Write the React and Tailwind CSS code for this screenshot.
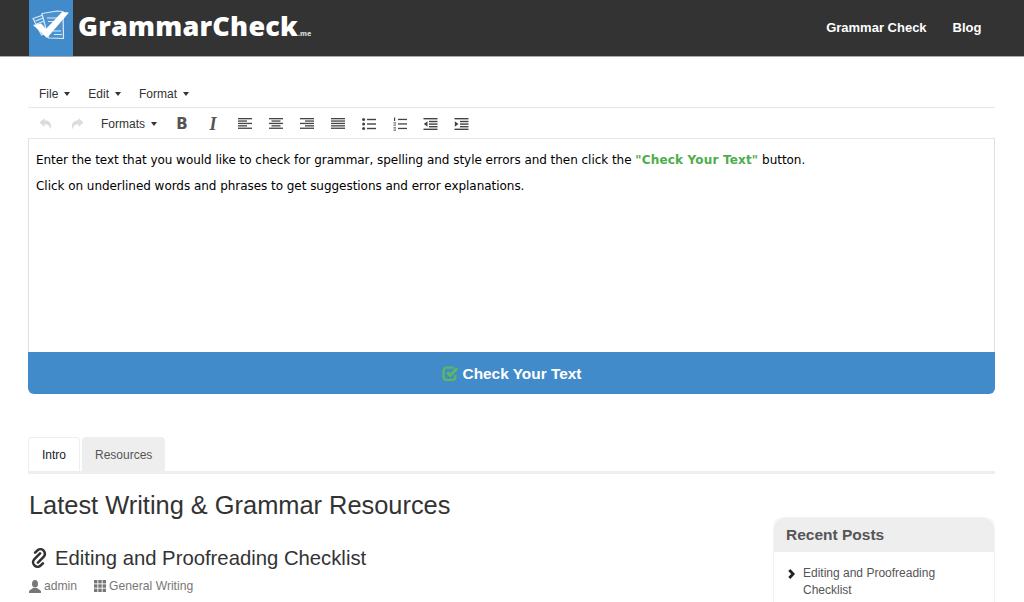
function Caret({ className = "ml-[6px]" }) {
  return <span className={`${className} inline-block w-0 h-0 border-x-[3px] border-x-transparent border-t-[4px] border-t-[#333]`}></span>
}

function Lines({ rows }) {
  // rows: [x, width] pairs drawn from the top of a 14px box
  return (
    <svg width="14" height="14" viewBox="0 0 14 14" fill="#444">
      {rows.map((r, i) => (
        <rect key={i} x={r[0]} y={1 + i * 2.4} width={r[1]} height="1.3" />
      ))}
    </svg>
  )
}

function ToolIcon({ children, className = "w-[31px]" }) {
  return <div className={`${className} h-[30px] flex items-center justify-center`}>{children}</div>
}

function Arrow({ flip }) {
  return (
    <svg width="14" height="14" viewBox="0 0 14 14" fill="#dcdcdc" className={flip ? "-scale-x-100" : ""}>
      <path d="M5.500 1L0.500 5.500l5 4.500V7.200c3 0 5 1 6 5.300 2-5.500-.5-9-6-9.300z" />
    </svg>
  )
}

function Bullets() {
  return (
    <svg width="14" height="14" viewBox="0 0 14 14" fill="#444">
      <circle cx="1.600" cy="2.500" r="1.500" />
      <circle cx="1.600" cy="7" r="1.500" />
      <circle cx="1.600" cy="11.500" r="1.500" />
      <rect x="5" y="1.800" width="9" height="1.400" />
      <rect x="5" y="6.300" width="9" height="1.400" />
      <rect x="5" y="10.800" width="9" height="1.400" />
    </svg>
  )
}

function Numbers() {
  return (
    <svg width="14" height="14" viewBox="0 0 14 14" fill="#444">
      <rect x="1" y="0.500" width="1.200" height="3.500" />
      <rect x="0.500" y="5.400" width="2.500" height="1" />
      <rect x="0.500" y="7.600" width="2.500" height="1" />
      <rect x="0.500" y="10.400" width="2.500" height="1" />
      <rect x="0.500" y="12.600" width="2.500" height="1" />
      <rect x="5" y="1.800" width="9" height="1.300" />
      <rect x="5" y="6.300" width="9" height="1.300" />
      <rect x="5" y="10.800" width="9" height="1.300" />
    </svg>
  )
}

function Indent({ out }) {
  return (
    <svg width="15" height="14" viewBox="0 0 15 14" fill="#444">
      <rect x="0.500" y="1" width="14" height="1.400" />
      <rect x="6" y="3.800" width="8.500" height="1.400" />
      <rect x="6" y="6.400" width="8.500" height="1.400" />
      <rect x="6" y="9" width="8.500" height="1.400" />
      <rect x="0.500" y="11.600" width="14" height="1.400" />
      {out ? <path d="M4.500 4.200v5.600L0.800 7z" /> : <path d="M0.800 4.200v5.600L4.500 7z" />}
    </svg>
  )
}

function LogoMark() {
  return (
    <svg width="44" height="56" viewBox="0 0 44 56" fill="none">
      <g stroke="#dbe9f6" strokeWidth="1.200" strokeLinejoin="round">
        <path d="M4 18.500l13-4.500 5 18-9.500 3z" fill="#4c92ce" />
        <path d="M6.500 21l8-3M7.500 24l8-3M8.500 27l5-2" />
        <path d="M13 13.500l15-2.500 6 .5 .5 27-15-.5-6.500-24z" fill="#4c92ce" />
        <path d="M18 18h10M19 21.500h8M24 31h8M25 34.500h8" />
      </g>
      <path d="M4 25l8-1.500 5 5.500L33 12l7 .5L18 38z" fill="#fff" />
    </svg>
  )
}

function LinkGlyph() {
  return (
    <svg width="20" height="20" viewBox="1 0 20 20" fill="none" stroke="#333" strokeWidth="2.600" strokeLinecap="round" strokeLinejoin="round">
      <g transform="rotate(-45 11 10)">
        <path d="M15 7.500H7a4.500 4.500 0 0 0 0 9H10" />
        <path d="M7 12.500h8a4.500 4.500 0 0 0 0-9H12" />
      </g>
    </svg>
  )
}

function UserGlyph() {
  return (
    <svg width="12" height="13" viewBox="0 0 12 13" fill="#777">
      <ellipse cx="6" cy="3.800" rx="3" ry="3.800" />
      <path d="M0 13v-1.500c0-1.600 2.500-2 4-3.500h4c1.500 1.500 4 1.900 4 3.500V13z" />
    </svg>
  )
}

function GridGlyph() {
  return (
    <svg width="12" height="12" viewBox="0 0 12 12" fill="#777">
      {[0, 4.300, 8.600].map((x) =>
        [0, 4.300, 8.600].map((y) => <rect key={`${x}-${y}`} x={x} y={y} width="3.400" height="3.400" />)
      )}
    </svg>
  )
}

function Chevron() {
  return (
    <svg width="8" height="10" viewBox="0 0 8 10" fill="none" stroke="#222" strokeWidth="2.800">
      <path d="M1.300 1l3.800 4-3.800 4" />
    </svg>
  )
}

function CheckBox() {
  return (
    <svg width="18" height="17" viewBox="0 0 17 16" fill="none" stroke="#5cb85c" className="mr-[3px]">
      <path d="M12.500 9.500v2a2.500 2.500 0 0 1-2.500 2.500H4a2.500 2.500 0 0 1-2.500-2.500V5A2.500 2.500 0 0 1 4 2.500h7" strokeWidth="2.200" />
      <path d="M4.800 6.800l3 3 6.500-6.800" strokeWidth="2.800" />
    </svg>
  )
}

export default function App() {
  return (
    <div className="h-[602px] overflow-hidden bg-white font-['Liberation_Sans',Arial,sans-serif] text-[#333]">
      {/* Header */}
      <header className="h-[57px] bg-[#333] border-b border-[#aaa] px-[28.5px] flex items-start justify-between">
        <div className="flex items-start">
          <div className="w-[44.500px] h-[56px] bg-[#428bca]">
            <LogoMark />
          </div>
          <div className="flex items-baseline ml-[5px] mt-[6px] text-white font-['Open_Sans',sans-serif] font-extrabold">
            <span className="text-[27px] leading-[40px] tracking-[0.2px]">GrammarCheck</span>
            <span className="text-[7px] text-[#ccc]">.me</span>
          </div>
        </div>
        <nav className="flex items-center h-[56px] gap-[26px] pr-[14px] text-white text-[13px] font-bold">
          <span>Grammar Check</span>
          <span>Blog</span>
        </nav>
      </header>

      <main className="pl-[28px] pr-[29px]">
        {/* Editor */}
        <div className="mt-[23px]">
          <div className="h-[28px] flex items-center gap-[18px] pl-[11px] border-b border-[#e6e6e6] text-[12px] text-[#333]">
            <span className="flex items-center">File<Caret /></span>
            <span className="flex items-center">Edit<Caret /></span>
            <span className="flex items-center">Format<Caret /></span>
          </div>
          <div className="h-[31px] pt-[1px] flex items-center pl-[3px] border-b border-[#e6e6e6]">
            <ToolIcon className="w-[30px]"><Arrow /></ToolIcon>
            <ToolIcon className="w-[32px]"><Arrow flip /></ToolIcon>
            <div className="ml-[8px] w-[66px] flex items-center text-[12px]">Formats<Caret /></div>
            <ToolIcon className="w-[30px]"><span className="mt-[2px] font-bold text-[15px] text-[#555] font-['DejaVu_Sans',sans-serif]">B</span></ToolIcon>
            <ToolIcon className="w-[32px]"><span className="mt-[1px] italic font-bold text-[18px] text-[#555] font-['Liberation_Serif',serif]">I</span></ToolIcon>
            <ToolIcon><Lines rows={[[0, 14], [0, 9], [0, 14], [0, 9], [0, 14]]} /></ToolIcon>
            <ToolIcon><Lines rows={[[0, 14], [2.500, 9], [0, 14], [2.500, 9], [0, 14]]} /></ToolIcon>
            <ToolIcon><Lines rows={[[0, 14], [5, 9], [0, 14], [5, 9], [0, 14]]} /></ToolIcon>
            <ToolIcon><Lines rows={[[0, 14], [0, 14], [0, 14], [0, 14], [0, 14]]} /></ToolIcon>
            <ToolIcon><Bullets /></ToolIcon>
            <ToolIcon><Numbers /></ToolIcon>
            <ToolIcon><Indent out /></ToolIcon>
            <ToolIcon><Indent /></ToolIcon>
          </div>
          <div className="h-[213px] border-x border-[#e0e0e0] px-[7px] pt-[13px] text-[12px] leading-[16px] text-black font-['DejaVu_Sans',Verdana,sans-serif]">
            <p className="tracking-[-0.04px]">
              Enter the text that you would like to check for grammar, spelling and style errors and then click the{" "}
              <strong className="text-[#4cae4c] tracking-[0.18px]">"Check Your Text"</strong> button.
            </p>
            <p className="mt-[10px] tracking-[-0.04px]">Click on underlined words and phrases to get suggestions and error explanations.</p>
          </div>
          <button className="w-full h-[42px] pt-[1px] bg-[#428bca] rounded-b-[6px] flex items-center justify-center text-white text-[15.4px] font-bold">
            <CheckBox />
            Check Your Text
          </button>
        </div>

        {/* Tabs */}
        <div className="mt-[43px] flex gap-[2px] border-b-[3px] border-[#eee] text-[12px]">
          <div className="h-[34px] px-[13px] flex items-center bg-white border border-b-0 border-[#eee] rounded-t-[4px] text-[#222]">Intro</div>
          <div className="h-[34px] pt-[1px] px-[13px] flex items-center bg-[#eee] rounded-t-[4px] text-[#555]">Resources</div>
        </div>

        {/* Content */}
        <div className="flex justify-between">
          <div className="ml-[1px]">
            <h1 className="mt-[15px] text-[25.4px] leading-[32px] text-[#333]">Latest Writing &amp; Grammar Resources</h1>
            <h2 className="mt-[23px] flex items-center gap-[6px] text-[20.3px] leading-[28px] text-[#333]">
              <LinkGlyph />
              Editing and Proofreading Checklist
            </h2>
            <div className="mt-[5px] flex items-center text-[12.15px] text-[#777]">
              <UserGlyph />
              <span className="ml-[3px]">admin</span>
              <span className="ml-[17px]"><GridGlyph /></span>
              <span className="ml-[3px]">General Writing</span>
            </div>
          </div>
          <aside className="mt-[43px] w-[222px] h-[120px] border border-[#f2f2f2] rounded-t-[10px]">
            <div className="h-[34px] bg-[#eee] rounded-t-[10px] px-[12px] flex items-center text-[15.5px] font-bold text-[#555]">Recent Posts</div>
            <div className="flex pl-[14px] pt-[13px] text-[12px] leading-[17px] text-[#555]">
              <span className="mt-[4px] mr-[7px]"><Chevron /></span>
              <span className="w-[150px]">Editing and Proofreading Checklist</span>
            </div>
          </aside>
        </div>
      </main>
    </div>
  )
}
